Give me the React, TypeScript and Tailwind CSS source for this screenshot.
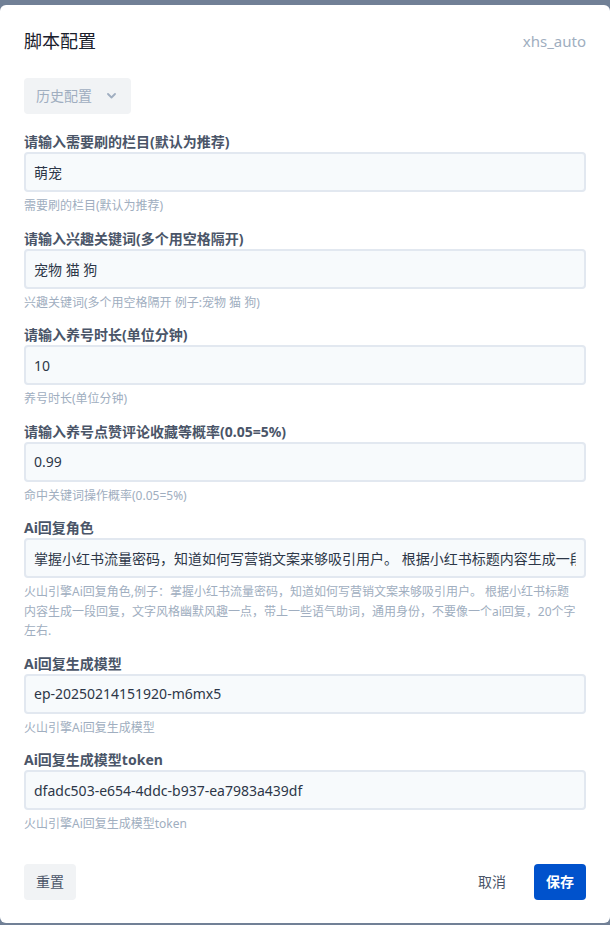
import React from "react";

const fields: { label: string; value: string; help: string }[] = [
  { label: "请输入需要刷的栏目(默认为推荐)", value: "萌宠", help: "需要刷的栏目(默认为推荐)" },
  { label: "请输入兴趣关键词(多个用空格隔开)", value: "宠物 猫 狗", help: "兴趣关键词(多个用空格隔开 例子:宠物 猫 狗)" },
  { label: "请输入养号时长(单位分钟)", value: "10", help: "养号时长(单位分钟)" },
  { label: "请输入养号点赞评论收藏等概率(0.05=5%)", value: "0.99", help: "命中关键词操作概率(0.05=5%)" },
  {
    label: "Ai回复角色",
    value: "掌握小红书流量密码，知道如何写营销文案来够吸引用户。 根据小红书标题内容生成一段回复，文字风格幽默风趣一点，带上一些语气助词，通用身份，不要像一个ai回复，20个字左右.",
    help: "火山引擎Ai回复角色,例子：掌握小红书流量密码，知道如何写营销文案来够吸引用户。 根据小红书标题内容生成一段回复，文字风格幽默风趣一点，带上一些语气助词，通用身份，不要像一个ai回复，20个字左右.",
  },
  { label: "Ai回复生成模型", value: "ep-20250214151920-m6mx5", help: "火山引擎Ai回复生成模型" },
  { label: "Ai回复生成模型token", value: "dfadc503-e654-4ddc-b937-ea7983a439df", help: "火山引擎Ai回复生成模型token" },
];

export default function App() {
  return (
    <div
      className="min-h-screen bg-[#718096] pt-[5px]"
      style={{ fontFamily: '"Noto Sans", "Noto Sans CJK SC", sans-serif' }}
    >
      <div className="bg-white rounded-md px-6 pt-[22px] pb-[23px]">
        <div className="flex items-center justify-between">
          <h2 className="text-lg leading-7 text-[#1a202c]">脚本配置</h2>
          <span className="text-[15px] text-[#a0aec0]">xhs_auto</span>
        </div>

        <button className="mt-[23px] h-9 pl-3 pr-[15px] rounded bg-[#f1f3f5] text-sm text-[#a0aec0] flex items-center gap-[15px]">
          <span>历史配置</span>
          <svg width="9" height="6" viewBox="0 0 9 6" fill="none">
            <path d="M1 1l3.5 3.5L8 1" stroke="#a0aec0" strokeWidth="1.8" strokeLinecap="round" strokeLinejoin="round" />
          </svg>
        </button>

        <div className="mt-[18px]">
          {fields.map((f) => (
            <div key={f.label} className="mb-[13px]">
              <label className="block text-sm leading-5 font-bold text-[#4a5568]">{f.label}</label>
              <input
                readOnly
                value={f.value}
                className="block w-full h-10 px-2 text-sm text-[#2d3748] bg-[#f7fafc] border-2 border-[#e2e8f0] rounded outline-none"
              />
              <p className="mt-1 pr-[10px] text-xs leading-[19.5px] text-[#a0aec0]">{f.help}</p>
            </div>
          ))}
        </div>

        <div className="pt-[17px] flex items-center justify-between">
          <button className="h-9 px-3 rounded bg-[#f1f3f5] text-sm text-[#4a5568]">重置</button>
          <div className="flex items-center gap-4">
            <button className="h-9 px-3 text-sm text-[#4a5568]">取消</button>
            <button className="h-9 px-3 rounded bg-[#0052cc] text-sm font-bold text-white">保存</button>
          </div>
        </div>
      </div>
    </div>
  );
}
